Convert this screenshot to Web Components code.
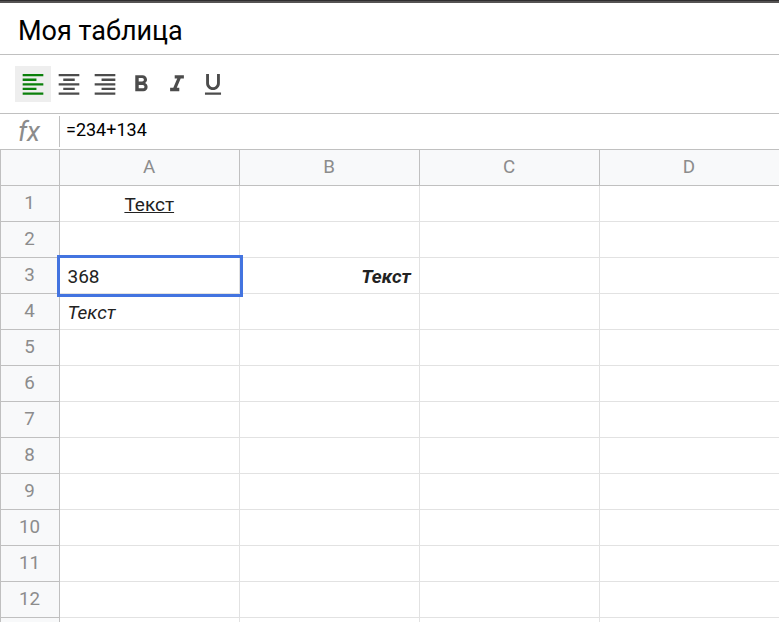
<!DOCTYPE html>
<html lang="ru">
<head>
<meta charset="utf-8">
<title>Моя таблица</title>
<style>
html, body { margin: 0; height: 100%; overflow: hidden; background: #fff; font-family: Roboto, sans-serif; }
</style>
</head>
<body>
<excel-app></excel-app>
<script>
class ExcelHeader extends HTMLElement {
  constructor() {
    super();
    this.attachShadow({ mode: 'open' }).innerHTML = `
      <style>
        :host { display: block; box-sizing: border-box; height: 55px; border-top: 3px solid #555353; border-bottom: 1px solid #c0c0c0; padding-left: 18px; font-size: 27px; line-height: 56px; color: #000; background: #fff; }
        .title { display: block; }
      </style>
      <span class="title"><slot></slot></span>`;
  }
}

const ICONS = {
  left: 'M15 15H3v2h12v-2zm0-8H3v2h12V7zM3 13h18v-2H3v2zm0 8h18v-2H3v2zM3 3v2h18V3H3z',
  center: 'M7 15v2h10v-2H7zm-4 6h18v-2H3v2zm0-8h18v-2H3v2zm4-6v2h10V7H7zM3 3v2h18V3H3z',
  right: 'M3 21h18v-2H3v2zm6-4h12v-2H9v2zm-6-4h18v-2H3v2zm6-4h12V7H9v2zM3 3v2h18V3H3z',
  bold: 'M15.6 10.79c.97-.67 1.65-1.77 1.65-2.79 0-2.26-1.75-4-4-4H7v14h7.04c2.09 0 3.71-1.7 3.71-3.79 0-1.52-.86-2.82-2.15-3.42zM10 6.5h3c.83 0 1.5.67 1.5 1.5s-.67 1.5-1.5 1.5h-3v-3zm3.5 9H10v-3h3.5c.83 0 1.5.67 1.5 1.5s-.67 1.5-1.5 1.5z',
  italic: 'M10 4v3h2.21l-3.42 8H6v3h8v-3h-2.21l3.42-8H18V4z',
  underline: 'M12 17c3.31 0 6-2.69 6-6V3h-2.5v8c0 1.93-1.57 3.5-3.5 3.5S8.5 12.93 8.5 11V3H6v8c0 3.31 2.69 6 6 6zm-7 2v2h14v-2H5z'
};

class ToolButton extends HTMLElement {
  constructor() {
    super();
    this.attachShadow({ mode: 'open' });
  }
  connectedCallback() {
    this.shadowRoot.innerHTML = `
      <style>
        :host { display: flex; width: 36px; height: 36px; align-items: center; justify-content: center; color: #4c4c4c; }
        :host([active]) { background: #eee; color: #0b800b; }
        svg { display: block; fill: currentColor; }
      </style>
      <svg width="28" height="28" viewBox="-0.2 -0.5 24.4 24.4"><path d="${ICONS[this.getAttribute('icon')]}"/></svg>`;
  }
}

class ExcelToolbar extends HTMLElement {
  constructor() {
    super();
    this.attachShadow({ mode: 'open' }).innerHTML = `
      <style>
        :host { display: flex; box-sizing: border-box; height: 59px; align-items: center; padding: 0 15px; border-bottom: 1px solid #c0c0c0; }
      </style>
      <tool-button icon="left" active></tool-button><tool-button icon="center"></tool-button><tool-button icon="right"></tool-button><tool-button icon="bold"></tool-button><tool-button icon="italic"></tool-button><tool-button icon="underline"></tool-button>`;
  }
}

class ExcelFormula extends HTMLElement {
  constructor() {
    super();
    this.attachShadow({ mode: 'open' }).innerHTML = `
      <style>
        :host { display: flex; box-sizing: border-box; height: 35px; padding: 2px 0 2px; }
        .fx { box-sizing: border-box; width: 60px; padding-right: 1px; border-right: 1px solid #c0c0c0; text-align: center; font-size: 27px; font-style: italic; line-height: 33px; color: #8c8c8c; }
        .input { padding-left: 6px; font-size: 18px; line-height: 28px; color: #000; }
      </style>
      <div class="fx">fx</div><div class="input"><slot></slot></div>`;
  }
}

class SheetCell extends HTMLElement {
  constructor() {
    super();
    this.attachShadow({ mode: 'open' }).innerHTML = `
      <style>
        :host { display: block; box-sizing: border-box; width: 180px; height: 36px; flex: none; padding: 0 8px 0 7.5px; border-right: 1px solid #e2e2e2; border-bottom: 1px solid #e2e2e2; font-size: 19px; line-height: 38px; color: #222; }
        :host([align=center]) { text-align: center; }
        :host([align=right]) { text-align: right; }
        :host([bold]) { font-weight: 700; }
        :host([italic]) { font-style: italic; }
        :host([underline]) { text-decoration: underline; }
        :host([selected]) { outline: 3px solid #4374e0; position: relative; z-index: 2; }
      </style><slot></slot>`;
  }
}

class SheetHeading extends HTMLElement {
  constructor() {
    super();
    this.attachShadow({ mode: 'open' }).innerHTML = `
      <style>
        :host { display: block; box-sizing: border-box; width: 180px; height: 36px; flex: none; padding-right: 1px; border-right: 1px solid #c0c0c0; border-bottom: 1px solid #c0c0c0; background: #f8f9fa; text-align: center; font-size: 18.75px; line-height: 34px; color: #8c8c8c; }
        :host([row]) { width: 60px; border-left: 1px solid #c0c0c0; }
      </style><slot></slot>`;
  }
}

class ExcelTable extends HTMLElement {
  constructor() {
    super();
    const cells = {
      '1A': '<sheet-cell align="center" underline>Текст</sheet-cell>',
      '3A': '<sheet-cell selected>368</sheet-cell>',
      '3B': '<sheet-cell align="right" bold italic>Текст</sheet-cell>',
      '4A': '<sheet-cell italic>Текст</sheet-cell>'
    };
    const cols = ['A', 'B', 'C', 'D'];
    let rows = '';
    for (let r = 1; r <= 13; r++) {
      rows += `<div class="row"><sheet-heading row>${r <= 12 ? r : ''}</sheet-heading>` +
        cols.map(c => cells[r + c] || '<sheet-cell></sheet-cell>').join('') + '</div>';
    }
    this.attachShadow({ mode: 'open' }).innerHTML = `
      <style>
        :host { display: block; border-top: 1px solid #c0c0c0; }
        .row { display: flex; }
      </style>
      <div class="row"><sheet-heading row></sheet-heading>${cols.map(c => `<sheet-heading>${c}</sheet-heading>`).join('')}</div>${rows}`;
  }
}

class ExcelApp extends HTMLElement {
  constructor() {
    super();
    this.attachShadow({ mode: 'open' }).innerHTML = `
      <style>
        :host { display: flex; flex-direction: column; height: 622px; overflow: hidden; }
        .edge { height: 1px; margin-bottom: -1px; background: #302e2f; z-index: 1; }
        excel-header, excel-toolbar, excel-formula, .edge { flex: none; }
      </style>
      <div class="edge"></div>
      <excel-header>Моя таблица</excel-header>
      <excel-toolbar></excel-toolbar>
      <excel-formula>=234+134</excel-formula>
      <excel-table></excel-table>`;
  }
}

customElements.define('excel-header', ExcelHeader);
customElements.define('tool-button', ToolButton);
customElements.define('excel-toolbar', ExcelToolbar);
customElements.define('excel-formula', ExcelFormula);
customElements.define('sheet-cell', SheetCell);
customElements.define('sheet-heading', SheetHeading);
customElements.define('excel-table', ExcelTable);
customElements.define('excel-app', ExcelApp);
</script>
</body>
</html>
